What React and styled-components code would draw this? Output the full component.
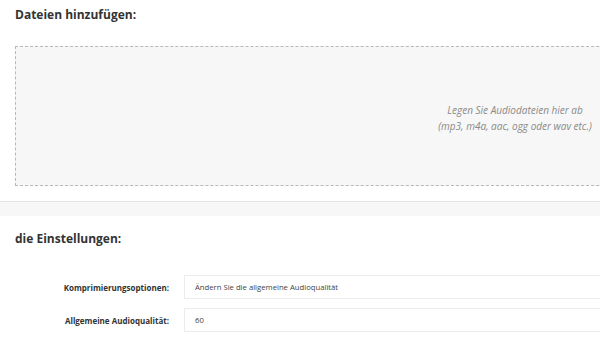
import React from "react";
import styled, { createGlobalStyle } from "styled-components";

const Global = createGlobalStyle`
  html, body { margin: 0; padding: 0; background: #fff; overflow: hidden; }
  body { font-family: "Open Sans", "Noto Sans", sans-serif; color: #333; }
`;

const Viewport = styled.div`
  width: 100vw;
  overflow: hidden;
`;

const Page = styled.div`
  width: 1030px;
`;

const Section = styled.section`
  padding: ${(p) => p.$pad};
`;

const Heading = styled.h2`
  margin: 0;
  font-size: 12px;
  font-weight: 700;
  line-height: 18px;
  color: #333;
`;

const DropZone = styled.div`
  box-sizing: border-box;
  margin-top: ${(p) => p.$top}px;
  height: 140px;
  border: 1px dashed #b8b8b8;
  background: #f7f7f7;
  display: flex;
  flex-direction: column;
  align-items: center;
  justify-content: center;
  padding-top: 4px;
  font-style: italic;
  font-size: 10px;
  line-height: 16px;
  color: #8a8a8a;
`;

const Divider = styled.div`
  height: 14px;
  border-top: 1px solid #e3e3e3;
  background: #f7f7f7;
`;

const Form = styled.div`
  margin-top: 27px;
  display: grid;
  grid-template-columns: 154px 1fr;
  column-gap: 15px;
  row-gap: 9px;
  align-items: center;
`;

const Label = styled.label`
  text-align: right;
  font-size: 8px;
  font-weight: 700;
  color: #333;
`;

const Field = styled.div`
  height: 22px;
  border: 1px solid #ececec;
  background: #fff;
  display: flex;
  align-items: center;
  padding-left: 10px;
  font-size: 7.7px;
  color: #444;
`;

export default function App() {
  return (
    <Viewport>
      <Global />
      <Page>
        <Section $pad="6px 15px 15px">
          <Heading>Dateien hinzufügen:</Heading>
          <DropZone $top={22}>
            <div>Legen Sie Audiodateien hier ab</div>
            <div>(mp3, m4a, aac, ogg oder wav etc.)</div>
          </DropZone>
        </Section>
        <Divider />
        <Section $pad="14px 15px 15px">
          <Heading>die Einstellungen:</Heading>
          <Form>
            <Label>Komprimierungsoptionen:</Label>
            <Field>Ändern Sie die allgemeine Audioqualität</Field>
            <Label>Allgemeine Audioqualität:</Label>
            <Field>60</Field>
          </Form>
        </Section>
      </Page>
    </Viewport>
  );
}
